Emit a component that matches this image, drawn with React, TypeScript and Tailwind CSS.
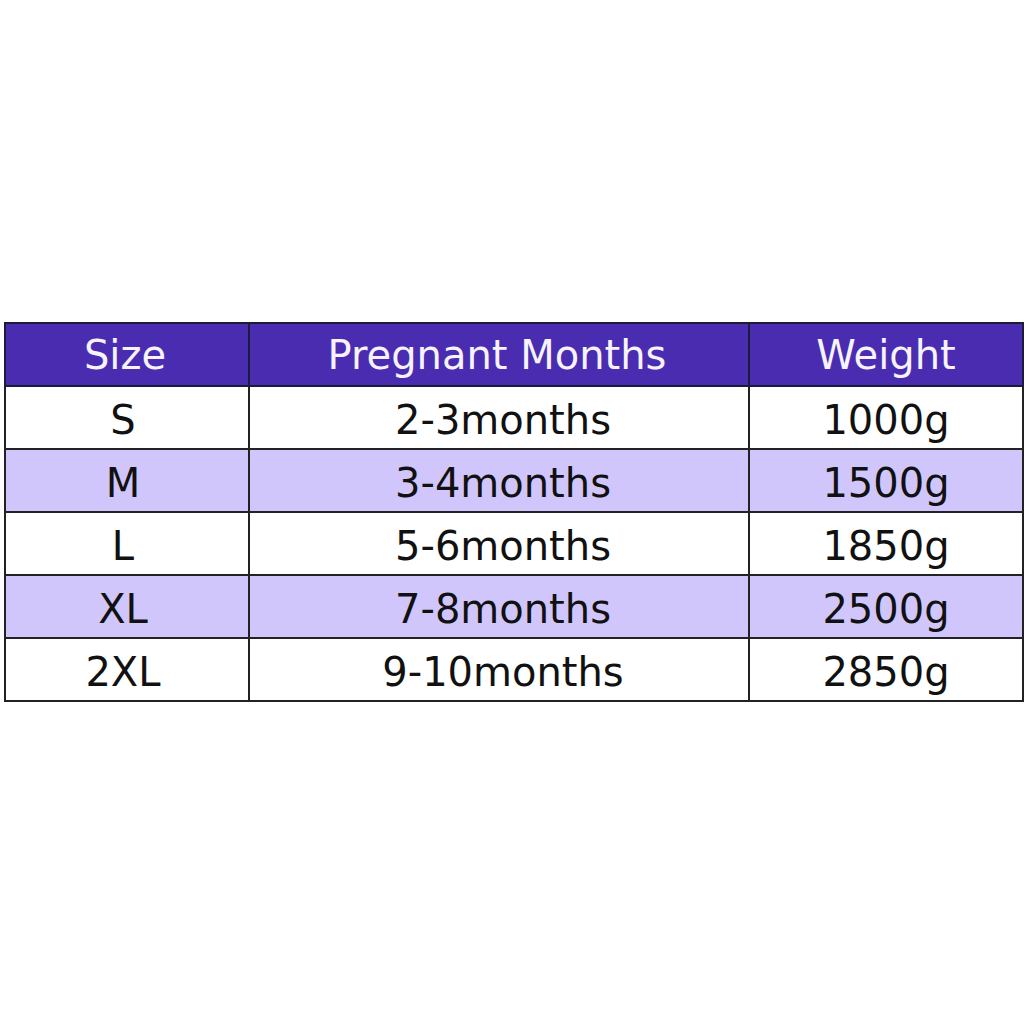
import React from 'react';

const rows = [
  { size: 'S', months: '2-3months', weight: '1000g' },
  { size: 'M', months: '3-4months', weight: '1500g' },
  { size: 'L', months: '5-6months', weight: '1850g' },
  { size: 'XL', months: '7-8months', weight: '2500g' },
  { size: '2XL', months: '9-10months', weight: '2850g' },
];

export default function App() {
  return (
    <div className="w-[1024px] h-[1024px] bg-white pt-[322px] pl-[4px]" style={{ fontFamily: '"DejaVu Sans", Verdana, sans-serif' }}>
      <table className="w-[1018px] border-collapse text-[40px] leading-none table-fixed">
        <colgroup>
          <col className="w-[244px]" />
          <col className="w-[500px]" />
          <col className="w-[274px]" />
        </colgroup>
        <thead>
          <tr className="h-[63px] bg-[#4a2cb0] text-[#f6f3ff]">
            <th className="border-2 border-[#1e1a3a] font-normal pr-1">Size</th>
            <th className="border-2 border-[#1e1a3a] font-normal pr-1">Pregnant Months</th>
            <th className="border-2 border-[#1e1a3a] font-normal">Weight</th>
          </tr>
        </thead>
        <tbody>
          {rows.map((r, i) => (
            <tr key={r.size} className={i % 2 === 1 ? 'h-[63px] bg-[#d0c6fb] text-[#111]' : 'h-[63px] bg-white text-[#111]'}>
              <td className="border-2 border-[#222] text-center pt-1 pr-2">{r.size}</td>
              <td className="border-2 border-[#222] text-center pt-1 pl-2">{r.months}</td>
              <td className="border-2 border-[#222] text-center pt-1">{r.weight}</td>
            </tr>
          ))}
        </tbody>
      </table>
    </div>
  );
}
